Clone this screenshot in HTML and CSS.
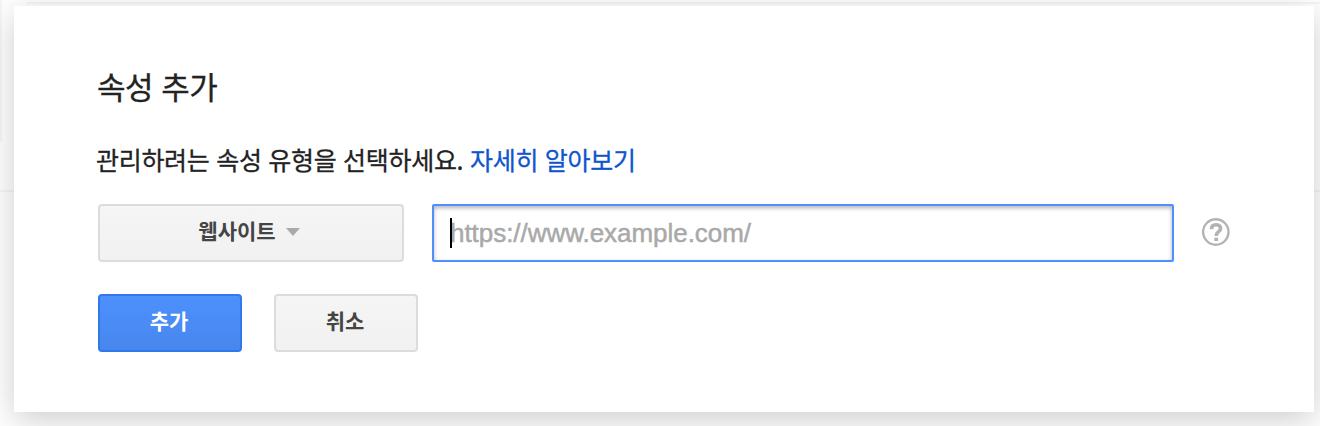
FILE: index.html
```html
<!DOCTYPE html>
<html lang="ko">
<head>
<meta charset="utf-8">
<title>속성 추가</title>
<link rel="stylesheet" href="styles.css">
</head>
<body>
<div class="page-line page-line-top"></div>
<div class="page-line page-line-side"></div>
<div class="page-line page-line-row"></div>
<main class="dialog">
  <h1 class="title">속성 추가</h1>
  <p class="description"><span class="prompt">관리하려는 속성 유형을 선택하세요.</span><a class="link">자세히 알아보기</a></p>
  <div class="fields">
    <div class="button select"><span class="label">웹사이트</span><span class="arrow"></span></div>
    <div class="url-input"><span class="caret"></span><span class="placeholder">https://www.example.com/</span></div>
    <svg class="help" width="28" height="28" viewBox="0 0 28 28" fill="none" stroke="#b3b3b3">
      <circle cx="13.8" cy="14" r="12.7" stroke-width="2.4"/>
      <path d="M9.5 11.2C9.5 8.2 11.3 6.8 14 6.8C16.7 6.8 18.6 8.2 18.6 10.4C18.6 13.8 14.2 13.6 14.2 17.9" stroke-width="3.6"/>
      <path d="M14.2 19.7V23" stroke-width="3.8"/>
    </svg>
  </div>
  <div class="actions">
    <div class="button primary"><span class="label">추가</span></div>
    <div class="button"><span class="label">취소</span></div>
  </div>
</main>
</body>
</html>
```

FILE: styles.css
```css
* { box-sizing: border-box; }
body {
  margin: 0;
  padding: 6px 6px 14px 14px;
  height: 426px;
  overflow: hidden;
  background: #fff;
  color: #222;
  font-family: "Liberation Sans", "Noto Sans CJK KR", sans-serif;
}
.page-line { position: absolute; background: #f6f6f6; z-index: -1; }
.page-line-top { left: 26px; right: 0; top: 2px; height: 2px; }
.page-line-side { left: 0; top: 0; width: 2px; height: 142px; }
.page-line-row { left: 0; right: 0; top: 190px; height: 2px; }
.dialog {
  height: 406px;
  padding: 58px 84px 0;
  background: #fff;
  box-shadow: 0 8px 32px rgba(0, 0, 0, .2);
}
.title {
  margin: 0 0 0 -1px;
  font-family: "Noto Sans CJK KR", sans-serif;
  font-size: 31px;
  font-weight: 400;
  line-height: 44px;
  letter-spacing: -0.5px;
  white-space: nowrap;
  -webkit-text-stroke: .3px currentColor;
}
.description {
  display: flex;
  margin: 33px 0 0 -2px;
  font-family: "Noto Sans CJK KR", sans-serif;
  font-size: 25px;
  line-height: 36px;
  letter-spacing: -0.3px;
  white-space: nowrap;
  -webkit-text-stroke: .3px currentColor;
}
.prompt { width: 374px; }
.link { color: #15c; }
.fields { display: flex; align-items: center; margin-top: 27px; }
.button {
  display: flex;
  align-items: center;
  justify-content: center;
  width: 144px;
  height: 58px;
  padding: 0 2px 6px 0;
  border: 2px solid #dcdcdc;
  border-radius: 4px;
  background: linear-gradient(#f5f5f5, #f1f1f1);
  color: #444;
  font-family: "Noto Sans CJK KR", sans-serif;
  font-size: 21px;
  font-weight: 700;
}
.select { width: 306px; padding-right: 4px; }
.arrow {
  margin: 4px 0 0 10px;
  border: 7px solid transparent;
  border-top: 8px solid #aaa;
  border-bottom: 0;
}
.url-input {
  display: flex;
  align-items: center;
  width: 742px;
  height: 58px;
  margin-left: 28px;
  padding-left: 16px;
  border: 2px solid #4d90fe;
  border-radius: 2px;
  box-shadow: inset 0 2px 4px rgba(0, 0, 0, .3);
  font-size: 26px;
  color: #a9a9a9;
}
.caret { width: 2px; height: 30px; margin-right: -2px; background: #000; z-index: 1; }
.placeholder { letter-spacing: -0.04px; -webkit-text-stroke: .5px #a9a9a9; }
.help { margin: -2px 0 0 28px; }
.actions { display: flex; gap: 32px; margin-top: 32px; }
.primary {
  border-color: #3079ed;
  background: linear-gradient(#4d90fe, #4787ed);
  color: #fff;
}
```
